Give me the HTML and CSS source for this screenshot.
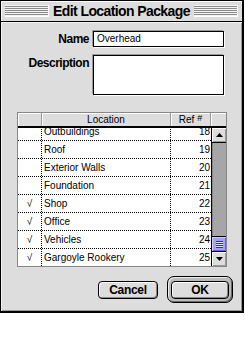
FILE: index.html
```html
<!DOCTYPE html>
<html lang="en">
<head>
    <meta charset="UTF-8">
    <title>Edit Location Package</title>
    <link rel="stylesheet" href="styles.css">
</head>
<body>
    <div class="dialog">
        <!-- заголовок окна -->
        <div class="titlebar">
            <span class="grip"></span>
            <span class="title">Edit Location Package</span>
            <span class="grip"></span>
        </div>

        <div class="content">
            <div class="field-row">
                <label class="label">Name</label>
                <div class="edit">Overhead</div>
            </div>
            <div class="field-row">
                <label class="label">Description</label>
                <div class="edit edit-tall"></div>
            </div>

            <!-- список локаций -->
            <div class="list">
                <div class="list-head">
                    <div class="hcell c-check"></div>
                    <div class="hcell c-loc">Location</div>
                    <div class="hcell c-ref">Ref <span class="hash">#</span></div>
                    <div class="hcell c-scroll"></div>
                </div>
                <div class="list-main">
                    <div class="rows">
                        <div class="row first"><div class="cell c-check"></div><div class="cell c-loc">Outbuildings</div><div class="cell c-ref">18</div></div>
                        <div class="row"><div class="cell c-check"></div><div class="cell c-loc">Roof</div><div class="cell c-ref">19</div></div>
                        <div class="row"><div class="cell c-check"></div><div class="cell c-loc">Exterior Walls</div><div class="cell c-ref">20</div></div>
                        <div class="row"><div class="cell c-check"></div><div class="cell c-loc">Foundation</div><div class="cell c-ref">21</div></div>
                        <div class="row"><div class="cell c-check">√</div><div class="cell c-loc">Shop</div><div class="cell c-ref">22</div></div>
                        <div class="row"><div class="cell c-check">√</div><div class="cell c-loc">Office</div><div class="cell c-ref">23</div></div>
                        <div class="row"><div class="cell c-check">√</div><div class="cell c-loc">Vehicles</div><div class="cell c-ref">24</div></div>
                        <div class="row"><div class="cell c-check">√</div><div class="cell c-loc">Gargoyle Rookery</div><div class="cell c-ref">25</div></div>
                    </div>
                    <div class="scroll">
                        <div class="arrow arrow-up">
                            <svg width="7" height="4" viewBox="0 0 7 4"><polygon points="0,4 7,4 3.5,0" fill="#000"/></svg>
                        </div>
                        <div class="track"></div>
                        <div class="thumb"><span class="thumb-grip"></span></div>
                        <div class="arrow arrow-down">
                            <svg width="7" height="4" viewBox="0 0 7 4"><polygon points="0,0 7,0 3.5,4" fill="#000"/></svg>
                        </div>
                    </div>
                </div>
            </div>

            <!-- кнопки -->
            <div class="buttons">
                <button class="btn" type="button">Cancel</button>
                <div class="ring">
                    <button class="btn btn-ok" type="button">OK</button>
                </div>
            </div>
        </div>
    </div>
</body>
</html>
```

FILE: styles.css
```css
* {
    box-sizing: border-box;
}

body {
    margin: 0;
    background: #fff;
    font-family: "Liberation Sans", Arial, sans-serif;
}

/* Окно */
.dialog {
    width: 244px;
    border: 1px solid #000;
    border-right-width: 2px;
    border-bottom-width: 2px;
    background: #ddd;
}

/* Заголовок */
.titlebar {
    display: flex;
    align-items: center;
    gap: 4px;
    height: 21px;
    padding: 0 4px 1px;
    border-bottom: 1px solid #000;
    background: #ddd;
    box-shadow: inset 1px 1px #fff;
}
.grip {
    flex: 1;
    height: 12px;
    background: repeating-linear-gradient(#f4f4f4 0 1px, #8a8a8a 1px 2px);
    border-right: 1px solid #fff;
    border-bottom: 1px solid #fff;
}
.title {
    font: bold 14px/20px "Liberation Sans", Arial, sans-serif;
    letter-spacing: -0.6px;
    color: #000;
}

/* Поля */
.content {
    padding: 9px 0 8px;
    box-shadow: inset 1px 1px #f4f4f4, inset -1px -1px #999;
}
.field-row {
    display: grid;
    grid-template-columns: 88px 131px;
    column-gap: 4px;
}
.field-row + .field-row {
    margin-top: 8px;
}
.label {
    font: bold 12px/16px "Liberation Sans", Arial, sans-serif;
    letter-spacing: -0.5px;
    text-align: right;
}
.edit {
    height: 16px;
    padding: 0 3px;
    border: 1px solid #000;
    background: #fff;
    box-shadow: -1px -1px #999, 1px 1px #fff;
    font-size: 10px;
    line-height: 14px;
}
.edit-tall {
    height: 40px;
}

/* Список */
.list {
    width: 210px;
    margin: 17px 0 0 16px;
    border: 1px solid #888;
    background: #fff;
    font-size: 10px;
}
.list-head {
    display: flex;
    border-bottom: 2px solid #000;
    background: #ddd;
}
.hcell {
    height: 13px;
    line-height: 13px;
    text-align: center;
    border-right: 1px solid #999;
    box-shadow: inset 1px 1px #fff;
}
.hcell.c-scroll {
    border-right: none;
}
.hash {
    font-size: 9px;
    position: relative;
    top: -2px;
}
.c-check {
    width: 24px;
}
.c-loc {
    width: 129px;
}
.c-ref {
    width: 40px;
}
.c-scroll {
    width: 15px;
}
.list-main {
    display: flex;
    height: 138px;
}
.rows {
    width: 193px;
    overflow: hidden;
}
.row {
    display: flex;
    height: 18px;
    border-bottom: 1px dotted #000;
    line-height: 17px;
}
.row.first {
    margin-top: -5px;
}
.cell {
    height: 17px;
}
.cell.c-check {
    text-align: center;
    border-right: 1px dotted #000;
}
.cell.c-loc {
    padding-left: 2px;
    border-right: 1px dotted #000;
}
.cell.c-ref {
    text-align: right;
    padding-right: 1px;
}

/* Полоса прокрутки */
.scroll {
    display: flex;
    flex-direction: column;
    width: 15px;
    border-left: 1px solid #000;
}
.arrow {
    display: flex;
    align-items: center;
    justify-content: center;
    height: 15px;
    background: #ddd;
    box-shadow: inset 1px 1px #fff, inset -1px -1px #999;
}
.arrow-up {
    border-bottom: 1px solid #000;
}
.arrow-down {
    border-top: 1px solid #000;
}
.track {
    flex: 1;
    background: #a6a6a6;
    box-shadow: inset 1px 0 #888;
}
.thumb {
    display: flex;
    align-items: center;
    justify-content: center;
    height: 15px;
    border-top: 1px solid #000;
    background: #a3a3ff;
    box-shadow: inset 1px 1px #ccf, inset -1px -1px #6666cc;
}
.thumb-grip {
    width: 7px;
    height: 7px;
    background: repeating-linear-gradient(#33338c 0 1px, #e0e0ff 1px 2px);
}

/* Кнопки */
.buttons {
    display: flex;
    justify-content: flex-end;
    align-items: center;
    gap: 9px;
    margin-top: 9px;
    padding-right: 9px;
}
.btn {
    width: 60px;
    height: 18px;
    padding: 0;
    border: 1px solid #000;
    border-radius: 4px;
    background: #ddd;
    box-shadow: inset 1px 1px #fff, inset -1px -1px #888;
    font: bold 12px/16px "Liberation Sans", Arial, sans-serif;
    letter-spacing: -0.3px;
    color: #000;
}
.btn-ok {
    width: 58px;
}
.ring {
    padding: 3px;
    border: 1px solid #000;
    border-radius: 7px;
    background: #bbb;
    box-shadow: inset 1px 1px #eee, inset -1px -1px #666;
}
```
